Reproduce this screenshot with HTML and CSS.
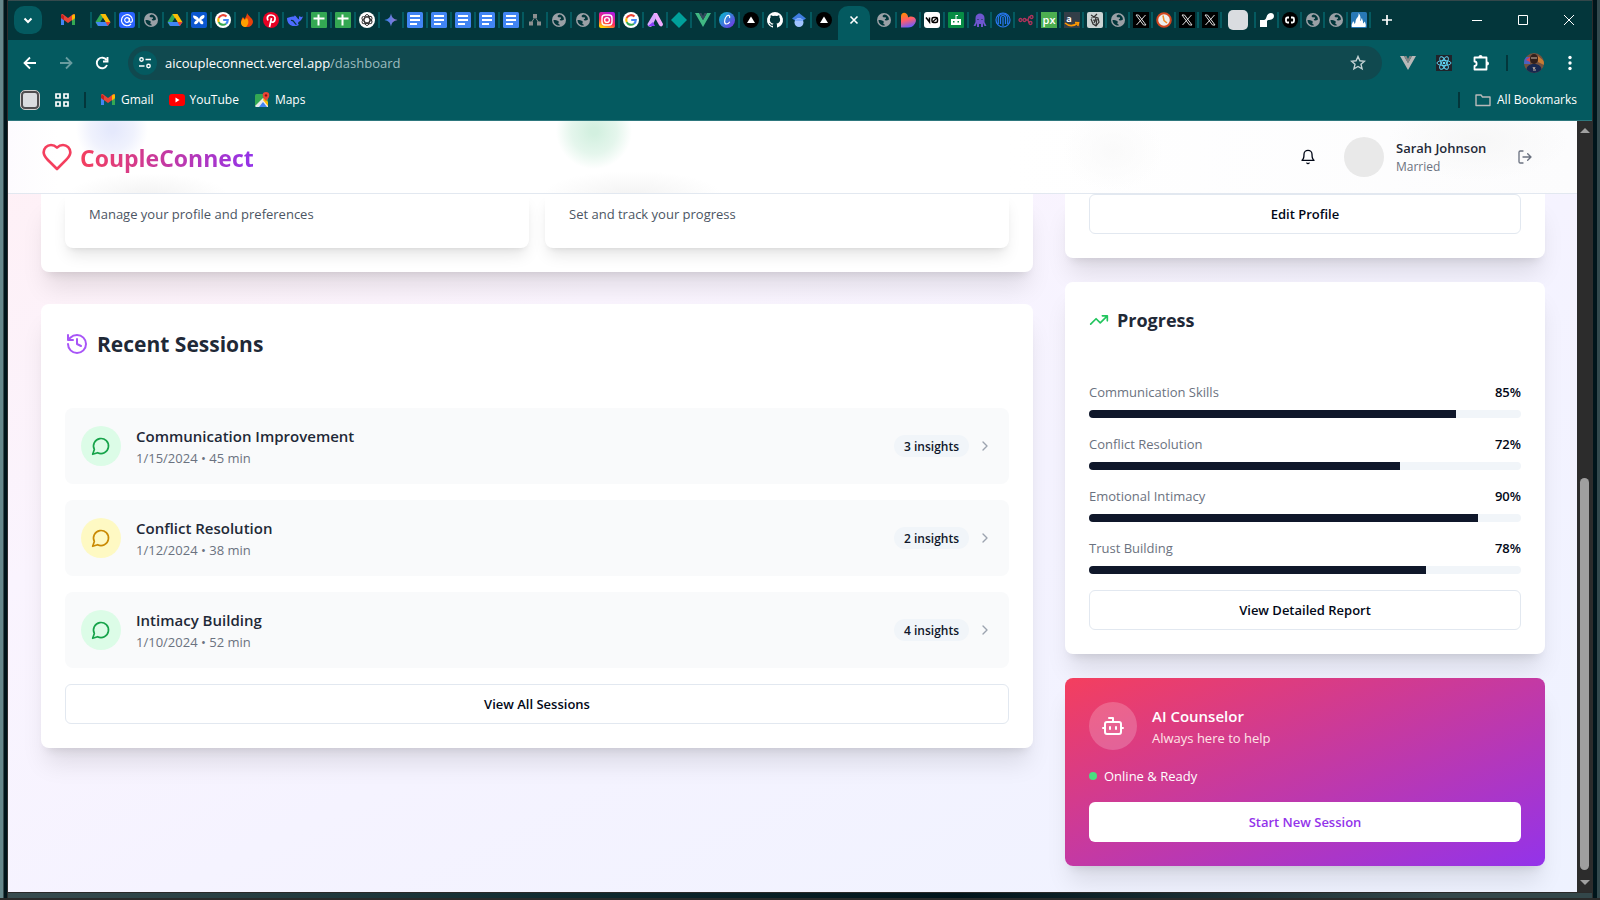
FILE: index.html
```html
<!DOCTYPE html>
<html lang="en">
<head>
<meta charset="utf-8">
<title>CoupleConnect Dashboard</title>
<link rel="stylesheet" href="styles.css">
</head>
<body>
<svg class="sprite" aria-hidden="true">
  <symbol id="gmail" viewBox="0 0 16 16"><path d="M1 4v9h3V7z" fill="#4285f4"/><path d="M15 4v9h-3V7z" fill="#34a853"/><path d="M12 4l3-2v4l-3 2.500z" fill="#fbbc04"/><path d="M1 3q1-2 3 0l4 3 4-3q2-2 3 0v3l-7 5-7-5z" fill="#ea4335"/><path d="M12 4.500V8.200l3-2.200V3.500q-1-2-3 0z" fill="#fbbc04"/><path d="M1 3.500V6l3 2.200V4.200q-2-2-3-.7z" fill="#c5221f"/></symbol>
  <symbol id="drive" viewBox="0 0 16 16"><path d="M5.500 2h5l-5 8-2.700 4L.5 10z" fill="#34a853"/><path d="M5.500 2h5l5 8.300h-5z" fill="#fbbc04"/><path d="M5.500 10H.7l2.500 4h9.600l2.600-4z" fill="#4285f4"/><path d="M10.500 10h5l-2.700 4z" fill="#ea4335"/><path d="M8 6l2.500 4h-5z" fill="#03363b"/></symbol>
  <symbol id="globe" viewBox="0 0 16 16"><circle cx="8" cy="8" r="7" fill="#9aa0a6"/><path d="M8.500 2.500C7 3 6 4 7 5s2.500-.3 3 1-2 1-1 2 2.500.5 4-.5A5.500 5.500 0 0 0 8.500 2.500zM2.500 8c2 0 4 .3 5 1.300S7 10.800 7.300 11.500 9 12 8.800 13.500C5 14 2.500 11 2.500 8z" fill="#03363b"/></symbol>
  <symbol id="google" viewBox="0 0 16 16"><circle cx="8" cy="8" r="8" fill="#fff"/><g fill="none" stroke-width="2.100"><path d="M11.500 4.500A4.800 4.800 0 0 0 3.700 6" stroke="#ea4335"/><path d="M3.700 6a4.800 4.800 0 0 0 0 4.100" stroke="#fbbc04"/><path d="M3.700 10.100A4.800 4.800 0 0 0 11 11.700" stroke="#34a853"/><path d="M11 11.700A4.800 4.800 0 0 0 12.800 8H8.200" stroke="#4285f4"/></g></symbol>
  <symbol id="sheet" viewBox="0 0 16 16"><rect width="16" height="16" rx="1" fill="#34a853"/><path d="M7.500 2.500v11M2.500 6.500h11" stroke="#fff" stroke-width="2"/></symbol>
  <symbol id="doc" viewBox="0 0 16 16"><rect width="16" height="16" rx="1.500" fill="#4285f4"/><path d="M3 4h10M3 8h10M3 12h7" stroke="#fff" stroke-width="1.800"/></symbol>
  <symbol id="vercel" viewBox="0 0 16 16"><circle cx="8" cy="8" r="8" fill="#000"/><path d="M8 4.500l4 6.500H4z" fill="#fff"/></symbol>
  <symbol id="xlogo" viewBox="0 0 16 16"><rect width="16" height="16" fill="#000"/><path d="M3 3h2.500L13 13h-2.500zM12.500 3L3.500 13" fill="none" stroke="#ddd"/></symbol>
  <symbol id="vue" viewBox="0 0 16 16"><path d="M0 1h4l4 7 4-7h4L8 15z" fill="#41b883"/><path d="M4 1h2.500L8 4l1.500-3H12L8 8z" fill="#35495e"/></symbol>
  <symbol id="chat" viewBox="0 0 24 24"><path d="M7.900 20A9 9 0 1 0 4 16.100L2 22Z"/></symbol>
  <symbol id="chevron" viewBox="0 0 24 24"><path d="m9 18 6-6-6-6"/></symbol>
</svg>

<div class="desktop">
<div class="window">
  <header class="tabstrip">
    <button class="tab-search" aria-label="Search tabs"><svg width="12" height="12" viewBox="0 0 12 12" class="line"><path d="M2.500 4.500L6 8l3.500-3.500" stroke-width="2"/></svg></button>
    <div class="tabs">
      <span class="tab tab-first"><svg><use href="#gmail"/></svg></span>
      <span class="tab"><svg><use href="#drive"/></svg></span>
      <span class="tab"><svg viewBox="0 0 16 16"><rect width="16" height="16" rx="3" fill="#2962ff"/><path d="M12 12A5.500 5.500 0 1 1 13.500 8c0 3-3 3-3 .5V6" fill="none" stroke="#fff" stroke-width="1.200"/><circle cx="8" cy="8" r="2.300" fill="none" stroke="#fff" stroke-width="1.200"/></svg></span>
      <span class="tab"><svg><use href="#globe"/></svg></span>
      <span class="tab"><svg><use href="#drive"/></svg></span>
      <span class="tab"><svg viewBox="0 0 16 16"><rect width="16" height="16" rx="2" fill="#0b57d0"/><path d="M2 3.500c3 0 5 1.500 6 3.500 1-2.500 3-4 5-4 1.500 2-.5 4-3 5 2 1 3 2.500 2 4-2 1-3.500-1-4-3-1 2-2.500 4-4.500 3-1-1.500 1-3.500 2.500-4C3.500 7.500 2 6 2 3.500z" fill="#fff"/></svg></span>
      <span class="tab"><svg><use href="#google"/></svg></span>
      <span class="tab"><svg viewBox="0 0 16 16"><path d="M8 1c1 3 6 5 6 9a5.500 5.500 0 0 1-6 5c-3.500 0-6-2-6-5 0-2 1-4 2-5l1.500 2C7 5 8 3 8 1z" fill="#e8410b"/><path d="M8 6c2 3 2 6-1 9-3.500 0-5-2-5-5l2-4 1.500 2z" fill="#ffa000"/></svg></span>
      <span class="tab"><svg viewBox="0 0 16 16"><circle cx="8" cy="8" r="8" fill="#e60023"/><path d="M5 8.500C3 4 6 3 8 3c3 0 4.500 2 4 4.500S9.500 11 8 9.500M8.500 6l-2 9" fill="none" stroke="#fff" stroke-width="1.700"/></svg></span>
      <span class="tab"><svg viewBox="0 0 16 16"><path d="M0 6c0 6 4 8.500 8 8 2 0 3-.5 4-1-1-1-1.300-1.500-.5-3 1.500-.5 3.500-2.500 4.500-5.500-1.500.7-2.500.5-3.500-.5-1 1.500-.5 3 0 3.500C10 7 9 3 7.500 3.500 8 5 5 4 0 6z" fill="#4d6bfe"/><path d="M4 8.500c3-1 3.500 3.500 5.500 4" fill="none" stroke="#03363b" stroke-width="1.200"/></svg></span>
      <span class="tab"><svg><use href="#sheet"/></svg></span>
      <span class="tab"><svg><use href="#sheet"/></svg></span>
      <span class="tab"><svg viewBox="0 0 16 16"><circle cx="8" cy="8" r="8" fill="#fff"/><g fill="none" stroke="#222" stroke-width=".9"><ellipse cx="8" cy="8" rx="2.800" ry="5.500"/><ellipse cx="8" cy="8" rx="2.800" ry="5.500" transform="rotate(60 8 8)"/><ellipse cx="8" cy="8" rx="2.800" ry="5.500" transform="rotate(120 8 8)"/></g></svg></span>
      <span class="tab"><svg viewBox="0 0 16 16"><defs><linearGradient id="gem" x2="1" y2="0"><stop stop-color="#2d7ff0"/><stop offset="1" stop-color="#a47ad0"/></linearGradient></defs><path d="M8 1.500c1 4.200 2.300 5.500 6.500 6.500-4.200 1-5.500 2.300-6.500 6.500-1-4.200-2.300-5.500-6.500-6.500C5.700 7 7 5.700 8 1.500z" fill="url(#gem)"/></svg></span>
      <span class="tab"><svg><use href="#doc"/></svg></span>
      <span class="tab"><svg><use href="#doc"/></svg></span>
      <span class="tab"><svg><use href="#doc"/></svg></span>
      <span class="tab"><svg><use href="#doc"/></svg></span>
      <span class="tab"><svg><use href="#doc"/></svg></span>
      <span class="tab"><svg viewBox="0 0 16 16"><path d="M6 2h4v4H6zM2 9.500h4v4H2zM10 9.500h4v4h-4z" fill="#8b8f90"/><path d="M8 5L4 11M8 5l4 6" stroke="#8b8f90"/></svg></span>
      <span class="tab"><svg><use href="#globe"/></svg></span>
      <span class="tab"><svg><use href="#globe"/></svg></span>
      <span class="tab"><svg viewBox="0 0 16 16"><defs><linearGradient id="ig" x1="0.300" y1="1" x2="0.700" y2="0"><stop stop-color="#ffd600"/><stop offset=".4" stop-color="#ff2a5b"/><stop offset="1" stop-color="#b01be0"/></linearGradient></defs><rect width="16" height="16" rx="2" fill="url(#ig)"/><rect x="3" y="3" width="10" height="10" rx="3" fill="none" stroke="#fff" stroke-width="1.400"/><circle cx="8" cy="8" r="2.400" fill="none" stroke="#fff" stroke-width="1.400"/></svg></span>
      <span class="tab"><svg><use href="#google"/></svg></span>
      <span class="tab"><svg viewBox="0 0 16 16"><path d="M7 1h3l6 11c0 3-3 3-4 1L7 4z" fill="#f0a8ff"/><path d="M7 1l2 5-4 8c-2 2-5 0-4.500-2z" fill="#d9a6ff"/><path d="M1 14l5-4 2 4z" fill="#8a3ffc"/></svg></span>
      <span class="tab"><svg viewBox="0 0 16 16"><path d="M8 0l8 8-8 8-8-8z" fill="#00a09a"/></svg></span>
      <span class="tab"><svg><use href="#vue"/></svg></span>
      <span class="tab"><svg viewBox="0 0 16 16"><defs><linearGradient id="cv" x2="1" y2="1"><stop stop-color="#00c4cc"/><stop offset="1" stop-color="#7d2ae8"/></linearGradient></defs><circle cx="8" cy="8" r="8" fill="url(#cv)"/><path d="M10.500 6c1-3-2-3.500-3.500-1-2 3-2 7 .5 7 1.500 0 2.500-1 3.300-2.300" fill="none" stroke="#fff" stroke-width="1.200"/></svg></span>
      <span class="tab"><svg><use href="#vercel"/></svg></span>
      <span class="tab"><svg viewBox="0 0 16 16"><path d="M8 0a8 8 0 0 0-2.500 15.600c.4 0 .5-.2.500-.4v-1.500c-2.200.5-2.700-1-2.700-1-.4-1-.9-1.200-.9-1.200-.7-.5 0-.5 0-.5.800 0 1.300.8 1.300.8.700 1.200 1.900.9 2.300.7 0-.5.300-.9.500-1.100-1.800-.2-3.600-.9-3.600-4 0-.9.300-1.600.8-2.100 0-.2-.4-1 .1-2.100 0 0 .7-.2 2.200.8a7 7 0 0 1 4 0c1.500-1 2.200-.8 2.200-.8.500 1.100.1 1.900.1 2.100.5.500.8 1.200.8 2.100 0 3.100-1.900 3.800-3.700 4 .3.300.6.800.6 1.500v2.300c0 .2.100.4.500.4A8 8 0 0 0 8 0z" fill="#fff"/></svg></span>
      <span class="tab"><svg viewBox="0 0 16 16"><path d="M8 1l7 5.500-3 2H4l-3-2z" fill="#3f7de0"/><circle cx="8" cy="10.500" r="4.500" fill="#a0c3ff"/><path d="M3.800 9C5 5.500 11 5.500 12.200 9z" fill="#76a7fa"/></svg></span>
      <span class="tab tab-last"><svg><use href="#vercel"/></svg></span>
    </div>
    <button class="active-tab" aria-label="Close tab"><svg width="12" height="12" viewBox="0 0 12 12" class="line"><path d="M2.500 2.500l7 7M9.500 2.500l-7 7" stroke-width="1.600"/></svg></button>
    <div class="tabs tabs-right">
      <span class="tab"><svg><use href="#globe"/></svg></span>
      <span class="tab"><svg viewBox="0 0 16 16"><defs><linearGradient id="lv" x1=".2" x2=".5" y2="1"><stop stop-color="#ff8a00"/><stop offset=".5" stop-color="#ff5c6c"/><stop offset="1" stop-color="#6a5cff"/></linearGradient></defs><path d="M1 4.500C1-.5 7-.5 8 4.500v1c1-1 2-1 3-1 5 0 6 4 4 7s-4 4-7 4H1z" fill="url(#lv)"/></svg></span>
      <span class="tab"><svg viewBox="0 0 16 16"><rect width="16" height="16" rx="3" fill="#fff"/><path d="M2 5.500l3.500 4.500V5.500" fill="none" stroke="#000" stroke-width="1.500"/><rect x="8" y="5.500" width="5.500" height="5" rx="1.500" fill="none" stroke="#000" stroke-width="1.500"/><path d="M8.500 10L13 6" stroke="#000" stroke-width="1.200"/></svg></span>
      <span class="tab"><svg viewBox="0 0 16 16"><rect width="16" height="16" rx="1" fill="#078b45"/><path d="M3 7h10v6H3zM7.500 3h1v4h-1zM8 3h2v1H8z" fill="#fff"/><path d="M5 9h1.500v1.500H5zM9.500 9H11v1.500H9.500z" fill="#078b45"/></svg></span>
      <span class="tab"><svg viewBox="0 0 16 16"><path d="M3.500 6c0-6 9-6 9 0v4l2 4h-2l-1.500-3v4H9v-3H7v3H5v-4l-1.500 3h-2l2-4z" fill="#6e56cf"/><path d="M5.500 7h1v1h-1zM9.500 7h1v1h-1z" fill="#03363b"/></svg></span>
      <span class="tab"><svg viewBox="0 0 16 16"><g fill="none" stroke="#2878f0" stroke-width="1.200"><circle cx="8" cy="8" r="7"/><path d="M5.500 12V6a2.500 2.500 0 0 1 5 0v6M3.300 12V6.500a4.700 4.700 0 0 1 9.400 0V12M8 5v9"/></g></svg></span>
      <span class="tab"><svg viewBox="0 0 16 16"><g fill="none" stroke="#b0335c" stroke-width="1.300"><circle cx="2.500" cy="8" r="1.500"/><circle cx="6.500" cy="8" r="1.500"/><circle cx="13.500" cy="5" r="1.500"/><circle cx="12.500" cy="11" r="1.500"/><path d="M8 8h2l1-3h1M10 8l1 3"/></g></svg></span>
      <span class="tab"><svg viewBox="0 0 16 16"><rect width="16" height="16" fill="#4caf50"/><text x="8" y="12" text-anchor="middle" font-size="11" font-weight="600" fill="#fff">px</text></svg></span>
      <span class="tab"><svg viewBox="0 0 16 16"><rect width="16" height="16" fill="#333e48"/><text x="5" y="10" text-anchor="middle" font-size="9" font-weight="700" fill="#fff">a</text><path d="M1 11c4 3.500 9 3 13 0M11 10.500l3.500.2-.7 3.300" fill="none" stroke="#f90" stroke-width="1.600"/></svg></span>
      <span class="tab"><svg viewBox="0 0 16 16"><rect width="16" height="16" rx="2" fill="#cbd5d5"/><path d="M4 3l3 2 3-3M4 6l4-1 3 1 1 4-3 4-3-2-2-5M6 8l4 1M9 6l-2 5M10 7l-1 6" fill="none" stroke="#333" stroke-width="1.200"/></svg></span>
      <span class="tab"><svg><use href="#globe"/></svg></span>
      <span class="tab"><svg><use href="#xlogo"/></svg></span>
      <span class="tab"><svg viewBox="0 0 16 16"><circle cx="8" cy="8" r="6.800" fill="#eee" stroke="#d2451e" stroke-width="2"/><path d="M7 3.500l1 5 3 2.500" fill="none" stroke="#f28c28" stroke-width="1.500"/></svg></span>
      <span class="tab"><svg><use href="#xlogo"/></svg></span>
      <span class="tab"><svg><use href="#xlogo"/></svg></span>
      <span class="tab tab-tile"><i class="tile"></i></span>
      <span class="tab"><svg viewBox="0 0 16 16"><path d="M1 8h4c1 0 2-1 2.500-3C8.500 0 15 0 15 4c0 3-3 4-5 4-1.500 0-2 .5-2 1.500V15H1z" fill="#fff"/></svg></span>
      <span class="tab"><svg viewBox="0 0 16 16"><circle cx="8" cy="8" r="8" fill="#000"/><path d="M7 5.500H5.500q-1.500 0-1.500 1.500v2q0 1.500 1.500 1.500H7M9 5.500h1.500q1.500 0 1.500 1.500v2q0 1.500-1.500 1.500H9" fill="none" stroke="#fff" stroke-width="1.800"/></svg></span>
      <span class="tab"><svg><use href="#globe"/></svg></span>
      <span class="tab"><svg><use href="#globe"/></svg></span>
      <span class="tab"><svg viewBox="0 0 16 16"><rect width="16" height="16" rx="1.500" fill="#2878b5"/><path d="M1 15c-1-3 1-4 1-6 1 1 1.500 2 1.500 3C5 11 4 8 6 6c1-1 2-3 1.500-5 2 2 2.500 5 1.500 8 1.500-.5 1-2 2-3 0 2 1.500 3 1 5.500 1-.5 1-1.500 2-2 0 2 1.500 3 .5 5.500z" fill="#fff"/></svg></span>
    </div>
    <button class="new-tab" aria-label="New tab"><svg width="12" height="12" viewBox="0 0 12 12" class="line"><path d="M6 1v10M1 6h10" stroke-width="1.700"/></svg></button>
    <div class="caption">
      <button aria-label="Minimize"><svg width="12" height="12" viewBox="0 0 12 12" class="line"><path d="M1 6.500h10"/></svg></button>
      <button aria-label="Maximize"><svg width="12" height="12" viewBox="0 0 12 12" class="line"><path d="M1.500 1.500h9v9h-9z"/></svg></button>
      <button aria-label="Close"><svg width="12" height="12" viewBox="0 0 12 12" class="line"><path d="M1 1l10 10M11 1L1 11"/></svg></button>
    </div>
  </header>

  <nav class="toolbar">
    <button class="nav-btn" aria-label="Back"><svg viewBox="0 0 16 16" class="line"><path d="M14 8H3M8 2.500L2.500 8 8 13.500" stroke-width="1.800"/></svg></button>
    <button class="nav-btn dim" aria-label="Forward"><svg viewBox="0 0 16 16" class="line"><path d="M2 8h11M8 2.500L13.500 8 8 13.500" stroke-width="1.800"/></svg></button>
    <button class="nav-btn" aria-label="Reload"><svg viewBox="0 0 16 16" class="line"><path d="M13 10A5.300 5.300 0 1 1 12.500 5M13.500 2v4.500H9" stroke-width="1.900"/></svg></button>
    <div class="omnibox">
      <span class="site-info"><svg width="14" height="14" viewBox="0 0 14 14" class="line"><circle cx="3.500" cy="3.500" r="1.700" stroke-width="1.400"/><circle cx="10.500" cy="10" r="1.700" stroke-width="1.400"/><path d="M7.500 3.500H13M1 10h5.500" stroke-width="1.600"/></svg></span>
      <a class="url" href="#">aicoupleconnect.vercel.app<span>/dashboard</span></a>
      <button class="star" aria-label="Bookmark this tab"><svg width="16" height="16" viewBox="0 0 16 16" class="line"><path d="M8 1.500l1.900 4.300 4.600.4-3.500 3.100 1.100 4.600L8 11.500l-4.100 2.400L5 9.300 1.500 6.200l4.600-.4z" stroke-width="1.400"/></svg></button>
    </div>
    <div class="extensions">
      <button aria-label="Vue devtools"><svg width="16" height="16" viewBox="0 0 16 16"><path d="M0 1h4l4 7 4-7h4L8 15z" fill="#b8b8b8"/><path d="M4 1h2.500L8 4l1.500-3H12L8 8z" fill="#858585"/></svg></button>
      <button aria-label="React devtools"><svg width="16" height="16" viewBox="0 0 16 16"><rect width="16" height="16" fill="#20232a"/><g fill="none" stroke="#61dafb" stroke-width=".9"><ellipse cx="8" cy="8" rx="7" ry="2.600"/><ellipse cx="8" cy="8" rx="7" ry="2.600" transform="rotate(60 8 8)"/><ellipse cx="8" cy="8" rx="7" ry="2.600" transform="rotate(120 8 8)"/></g><circle cx="8" cy="8" r="1.300" fill="#61dafb"/></svg></button>
      <button aria-label="Extensions"><svg width="18" height="18" viewBox="0 0 18 18" class="line"><path d="M2.500 3.500h12v12h-12v-3.500c2.800 0 2.800-4.500 0-4.500z" stroke-width="1.800" stroke-linejoin="round"/><path d="M6.500 3a2 2 0 0 1 4 0zM15 7.500a2 2 0 0 1 0 4z" fill="#fff" stroke="none"/></svg></button>
    </div>
    <i class="rule"></i>
    <button class="profile" aria-label="Profile"><svg width="20" height="20" viewBox="0 0 20 20"><defs><clipPath id="pc"><circle cx="10" cy="10" r="10"/></clipPath></defs><g clip-path="url(#pc)"><rect width="20" height="20" fill="#74523f"/><path d="M0 4h6v7H0z" fill="#4b62c0"/><path d="M2 7l4-3v5z" fill="#d8404c"/><path d="M14 3l6 5v4l-6-3z" fill="#c77c35"/><ellipse cx="10" cy="6" rx="4" ry="5" fill="#32201c"/><path d="M7 5h6" stroke="#cdb8a8" stroke-width="1"/><path d="M2 20c0-7 3-9 8-9s8 2 8 9z" fill="#182850"/><path d="M9 14l1 2 1-2M9 17h3" stroke="#c6b5a6" fill="none"/></g></svg></button>
    <button class="menu" aria-label="Menu"><svg width="4" height="16" viewBox="0 0 4 16" fill="#fff"><circle cx="2" cy="2.500" r="1.700"/><circle cx="2" cy="8" r="1.700"/><circle cx="2" cy="13.500" r="1.700"/></svg></button>
  </nav>

  <nav class="bookmarks">
    <i class="group-chip"></i>
    <svg width="14" height="14" viewBox="0 0 14 14" class="line"><path d="M1 1h4v4H1zM9 1h4v4H9zM1 9h4v4H1zM9 9h4v4H9z" stroke-width="1.700"/></svg>
    <i class="rule"></i>
    <a href="#"><svg width="16" height="16"><use href="#gmail"/></svg>Gmail</a>
    <a href="#"><svg width="16" height="16" viewBox="0 0 16 16"><rect y="2" width="16" height="12" rx="3" fill="#f00"/><path d="M6.500 5.500v5l4-2.500z" fill="#fff"/></svg>YouTube</a>
    <a href="#"><svg width="16" height="16" viewBox="0 0 16 16"><rect x="1" y="2" width="13" height="13" rx="1.500" fill="#34a853"/><path d="M1 14L9 6l5 5v4H2z" fill="#e8eaed"/><path d="M5 15l4-5 4 5z" fill="#4285f4"/><path d="M10 6l4 4v4l-5-6z" fill="#fbbc04"/><path d="M12 0a3.300 3.300 0 0 1 3.300 3.300C15.300 6 12 9 12 9S8.700 6 8.700 3.300A3.300 3.300 0 0 1 12 0z" fill="#ea4335"/><circle cx="12" cy="3.400" r="1.200" fill="#811"/></svg>Maps</a>
    <i class="rule push"></i>
    <a class="all" href="#"><svg width="16" height="16" viewBox="0 0 16 16"><path d="M1 3h5l1.500 2H15v8.500H1z" fill="none" stroke="#b9b9b9" stroke-width="1.400" stroke-linejoin="round"/></svg>All Bookmarks</a>
  </nav>

  <div class="viewport">
    <div class="page">
      <header class="site-header">
        <a class="brand" href="#"><svg width="32" height="32" viewBox="0 0 24 24" class="icon"><path d="M19 14c1.490-1.460 3-3.210 3-5.500A5.500 5.500 0 0 0 16.500 3c-1.760 0-3 .5-4.500 2-1.500-1.500-2.740-2-4.500-2A5.500 5.500 0 0 0 2 8.500c0 2.300 1.500 4.050 3 5.500l7 7Z"/></svg><span>CoupleConnect</span></a>
        <div class="account">
          <button class="icon-btn" aria-label="Notifications"><svg width="16" height="16" viewBox="0 0 24 24" class="icon"><path d="M6 8a6 6 0 0 1 12 0c0 7 3 9 3 9H3s3-2 3-9M10.300 21a1.940 1.940 0 0 0 3.400 0"/></svg></button>
          <span class="avatar"></span>
          <div class="who"><strong>Sarah Johnson</strong><span>Married</span></div>
          <button class="icon-btn muted" aria-label="Log out"><svg width="16" height="16" viewBox="0 0 24 24" class="icon"><path d="M9 21H5a2 2 0 0 1-2-2V5a2 2 0 0 1 2-2h4M16 17l5-5-5-5M21 12H9"/></svg></button>
        </div>
      </header>
      <main class="dashboard">
        <div class="col col-main">
          <section class="card card-cut">
            <div class="actions">
              <div class="action">Manage your profile and preferences</div>
              <div class="action">Set and track your progress</div>
            </div>
          </section>
          <section class="card">
            <h2 class="title title-lg"><svg width="24" height="24" viewBox="0 0 24 24" class="icon purple"><path d="M3 12a9 9 0 1 0 9-9 9.750 9.750 0 0 0-6.740 2.740L3 8M3 3v5h5M12 7v5l4 2"/></svg>Recent Sessions</h2>
            <div class="sessions">
              <article class="session">
                <span class="bubble green"><svg width="20" height="20" class="icon"><use href="#chat"/></svg></span>
                <div class="info"><h3>Communication Improvement</h3><p>1/15/2024 • 45 min</p></div>
                <span class="badge">3 insights</span>
                <svg width="16" height="16" class="icon chev"><use href="#chevron"/></svg>
              </article>
              <article class="session">
                <span class="bubble yellow"><svg width="20" height="20" class="icon"><use href="#chat"/></svg></span>
                <div class="info"><h3>Conflict Resolution</h3><p>1/12/2024 • 38 min</p></div>
                <span class="badge">2 insights</span>
                <svg width="16" height="16" class="icon chev"><use href="#chevron"/></svg>
              </article>
              <article class="session">
                <span class="bubble green"><svg width="20" height="20" class="icon"><use href="#chat"/></svg></span>
                <div class="info"><h3>Intimacy Building</h3><p>1/10/2024 • 52 min</p></div>
                <span class="badge">4 insights</span>
                <svg width="16" height="16" class="icon chev"><use href="#chevron"/></svg>
              </article>
              <button class="btn">View All Sessions</button>
            </div>
          </section>
        </div>
        <div class="col col-side">
          <section class="card card-cut"><button class="btn">Edit Profile</button></section>
          <section class="card">
            <h2 class="title"><svg width="20" height="20" viewBox="0 0 24 24" class="icon lime"><path d="M22 7l-8.500 8.500-5-5L2 17M16 7h6v6"/></svg>Progress</h2>
            <div class="sessions">
              <div class="metric"><span>Communication Skills</span><b>85%</b><div class="bar"><i style="width:85%"></i></div></div>
              <div class="metric"><span>Conflict Resolution</span><b>72%</b><div class="bar"><i style="width:72%"></i></div></div>
              <div class="metric"><span>Emotional Intimacy</span><b>90%</b><div class="bar"><i style="width:90%"></i></div></div>
              <div class="metric"><span>Trust Building</span><b>78%</b><div class="bar"><i style="width:78%"></i></div></div>
              <button class="btn">View Detailed Report</button>
            </div>
          </section>
          <section class="card counselor">
            <div class="bot-row">
              <span class="bot"><svg width="24" height="24" viewBox="0 0 24 24" class="icon"><path d="M12 8V4H8M2 14h2M20 14h2M15 13v2M9 13v2"/><rect x="4" y="8" width="16" height="12" rx="2"/></svg></span>
              <div><h3>AI Counselor</h3><p>Always here to help</p></div>
            </div>
            <div class="status"><i></i>Online &amp; Ready</div>
            <button class="btn btn-plain">Start New Session</button>
          </section>
        </div>
      </main>
    </div>
    <div class="scrollbar" aria-hidden="true"><i class="up"></i><i class="thumb"></i><i class="down"></i></div>
  </div>
</div>
</div>
</body>
</html>
```
FILE: styles.css
```css
* { box-sizing: border-box; margin: 0; }
body { font-family: "Open Sans", "Noto Sans", sans-serif; font-size: 13px; line-height: 20px; color: #020817; }
button { font: inherit; color: inherit; border: 0; padding: 0; background: none; display: flex; align-items: center; justify-content: center; }
a { color: inherit; text-decoration: none; }
svg { flex: none; display: block; }
.sprite { position: absolute; width: 0; height: 0; }
.line { fill: none; stroke: #fff; }
.icon { fill: none; stroke: currentColor; stroke-width: 2; stroke-linecap: round; stroke-linejoin: round; }

.desktop { height: 100vh; padding: 1px 8px 5px; background: linear-gradient(90deg, #66888c 0 3px, #35494c 3px 4px, #00151b 4px 7px, #2d2d2d 7px 8px, transparent 8px calc(100% - 8px), #2d2d2d calc(100% - 8px) calc(100% - 7px), #00151b calc(100% - 7px) calc(100% - 3px), #32494d calc(100% - 3px)), linear-gradient(90deg, #394d50, #102b30 35%, #00141b 60%, #33474a 90%); border-bottom: 2px solid #2a2a2a; }
.window { height: 100%; display: flex; flex-direction: column; background: #045a60; border-bottom: 1px solid #2a2a2a; }

.tabstrip { display: flex; height: 39px; background: #03363b; }
.tab-search { width: 28px; height: 28px; margin: 5px 0 0 6px; border-radius: 10px; background: #045a60; }
.tabs { display: flex; align-items: center; height: 38px; }
.tab { width: 24px; height: 16px; display: flex; justify-content: center; border-right: 2px solid #045a60; }
.tab svg { width: 16px; height: 16px; overflow: visible; }
.tab-first { width: 50px; padding-left: 4px; }
.tab-last { border: 0; }
.active-tab { width: 32px; height: 34px; margin: 5px 3px 0 2px; padding-bottom: 6px; border-radius: 10px 10px 0 0; background: #045a60; }
.tabs-right .tab { width: 23px; }
.tabs-right .tab:nth-child(-n+4) { width: 24px; }
.tabs-right .tab-tile { width: 34px; align-items: center; }
.tile { width: 20px; height: 20px; border-radius: 5px; background: #dadce0; flex: none; }
.new-tab { width: 32px; height: 38px; }
.caption { display: flex; height: 38px; margin-left: auto; }
.caption button { width: 46px; }

.toolbar { display: flex; align-items: center; height: 40px; padding: 6px 20px 0 4px; }
.nav-btn { width: 36px; height: 34px; }
.nav-btn svg { width: 16px; height: 16px; }
.dim { opacity: .4; }
.omnibox { flex: 1; display: flex; align-items: center; gap: 8px; height: 34px; margin-left: 8px; padding: 0 16px 0 5px; border-radius: 17px; background: #10494f; }
.site-info { width: 24px; height: 24px; border-radius: 50%; background: #045a60; display: flex; align-items: center; justify-content: center; }
.url { flex: 1; color: #fff; }
.url span { color: #9dbcbf; }
.star { opacity: .75; }
.extensions { display: flex; align-items: center; gap: 20px; padding-left: 18px; }
.rule { width: 2px; height: 16px; background: #03363b; }
.toolbar .rule { margin-left: 16px; }
.profile { margin: 0 24px 0 16px; }
.bookmarks { display: flex; align-items: center; height: 41px; padding: 0 15px 0 12px; font-size: 12px; color: #fff; border-bottom: 1px solid #2d777d; }
.group-chip { width: 20px; height: 20px; border: 3px solid #504d50; border-radius: 5px; background: #dadce0; outline: 1px solid #d0d0d0; outline-offset: -1px; margin-right: 15px; }
.bookmarks .rule { margin: 0 14px 0 15px; }
.bookmarks a { display: flex; align-items: center; gap: 5px; margin-right: 15px; }
.bookmarks .rule.push { margin: 0 15px 0 auto; }
.bookmarks .all { margin: 0; gap: 6px; }

.viewport { flex: 1; min-height: 0; display: flex; }
.page { flex: 1; overflow: hidden; background: linear-gradient(to bottom right, #fff0f5, #faf4fe 30%, #f5f3ff 55%, #eef2ff); }
.site-header { display: flex; align-items: center; justify-content: space-between; height: 73px; padding: 0 32px 0 33px; border-bottom: 1px solid #e2e8f0;
  background: radial-gradient(ellipse 36px 36px at 104px 8px, #e5e9fc 10%, rgba(229,233,252,.6) 60%, transparent), radial-gradient(ellipse 38px 38px at 586px 10px, #d3f0e0 10%, rgba(211,240,224,.6) 60%, transparent), radial-gradient(ellipse 80px 22px at 140px 74px, #f3f3f3, transparent), radial-gradient(ellipse 90px 24px at 624px 74px, #f3f3f3, transparent), radial-gradient(ellipse 90px 40px at 1470px 20px, #f7f7f7, transparent), radial-gradient(ellipse 50px 40px at 1105px 30px, #fafafa, transparent), linear-gradient(90deg, #fdfbfe, #fff 50px, #fff 1000px, #fcfcfd); }
.brand { display: flex; align-items: center; gap: 7px; color: #f43f5e; }
.brand span { font-size: 23px; font-weight: 700; line-height: 32px; padding-top: 2px; background: linear-gradient(90deg, #f43f5e, #9333ea); -webkit-background-clip: text; background-clip: text; color: transparent; }
.account { display: flex; align-items: center; }
.icon-btn { width: 40px; height: 40px; }
.muted { color: #6b7280; }
.avatar { width: 40px; height: 40px; margin: 0 12px 0 16px; border-radius: 50%; background: #e9e9e9; }
.who { min-width: 93px; margin-right: 16px; display: flex; flex-direction: column; }
.who strong { font-weight: 600; color: #1f2937; line-height: 20px; }
.who span { font-size: 12px; line-height: 18px; color: #6b7280; }

.dashboard { display: grid; grid-template-columns: repeat(3, 1fr); gap: 32px; padding: 0 32px 32px 33px; }
.col { display: flex; flex-direction: column; gap: 32px; }
.col-main { grid-column: span 2; }
.col-side { gap: 24px; }
.card { padding: 24px; border-radius: 8px; background: #fff; box-shadow: 0 20px 25px -5px rgba(0,0,0,.1), 0 8px 10px -6px rgba(0,0,0,.1); }
.card-cut { padding-top: 0; border-radius: 0 0 8px 8px; }
.actions { display: grid; grid-template-columns: 1fr 1fr; gap: 16px; }
.action { padding: 10px 24px 24px; border-radius: 0 0 8px 8px; background: #fff; color: #4b5563; box-shadow: 0 10px 15px -3px rgba(0,0,0,.1), 0 4px 6px -4px rgba(0,0,0,.1); }
.title { display: flex; align-items: center; gap: 8px; font-size: 18px; line-height: 28px; font-weight: 700; color: #1f2937; }
.title-lg { font-size: 21px; line-height: 32px; }
.purple { color: #a855f7; }
.lime { color: #22c55e; }
.sessions { display: flex; flex-direction: column; gap: 16px; margin-top: 48px; }
.session { display: flex; align-items: center; padding: 16px; border-radius: 8px; background: #f9fafb; }
.bubble { width: 40px; height: 40px; border-radius: 50%; display: flex; align-items: center; justify-content: center; margin-right: 15px; }
.green { background: #dcfce7; color: #16a34a; }
.yellow { background: #fef9c3; color: #ca8a04; }
.info { flex: 1; }
.info h3 { font-size: 15px; line-height: 24px; font-weight: 600; color: #1f2937; }
.info p { color: #6b7280; }
.badge { padding: 4px 10px 2px; border-radius: 11px; background: #f1f5f9; font-size: 12px; line-height: 16px; font-weight: 600; color: #0f172a; }
.chev { margin-left: 8px; color: #9ca3af; }
.btn { width: 100%; height: 40px; border: 1px solid #e2e8f0; border-radius: 6px; background: #fff; font-weight: 600; }
.metric { display: grid; grid-template-columns: 1fr auto; row-gap: 8px; color: #6b7280; }
.metric b { font-weight: 600; color: #020817; }
.bar { grid-column: 1 / -1; height: 8px; border-radius: 4px; background: #f1f5f9; overflow: hidden; }
.bar i { display: block; height: 100%; background: #0f172a; }
.counselor { color: #fff; background: linear-gradient(to bottom right, #f43f5e, #9333ea); }
.bot-row { display: flex; align-items: center; gap: 15px; }
.bot { width: 48px; height: 48px; border-radius: 50%; background: rgba(255,255,255,.2); display: flex; align-items: center; justify-content: center; }
.counselor h3 { font-size: 15px; line-height: 24px; font-weight: 600; }
.counselor p { color: #ffe4e6; }
.status { display: flex; align-items: center; gap: 7px; margin: 16px 0; }
.status i { width: 8px; height: 8px; border-radius: 50%; background: #4ade80; }
.btn-plain { border: 0; color: #9333ea; }

.scrollbar { width: 15px; display: flex; flex-direction: column; align-items: center; padding: 7px 0; background: #2c2c2c; }
.up, .down { border: 5px solid transparent; border-top: 0; border-bottom: 5px solid #a0a0a0; }
.down { border-bottom: 0; border-top: 5px solid #a0a0a0; }
.thumb { width: 9px; flex: 1; margin: 345px 0 10px; border-radius: 5px; background: #9f9f9f; }
```
